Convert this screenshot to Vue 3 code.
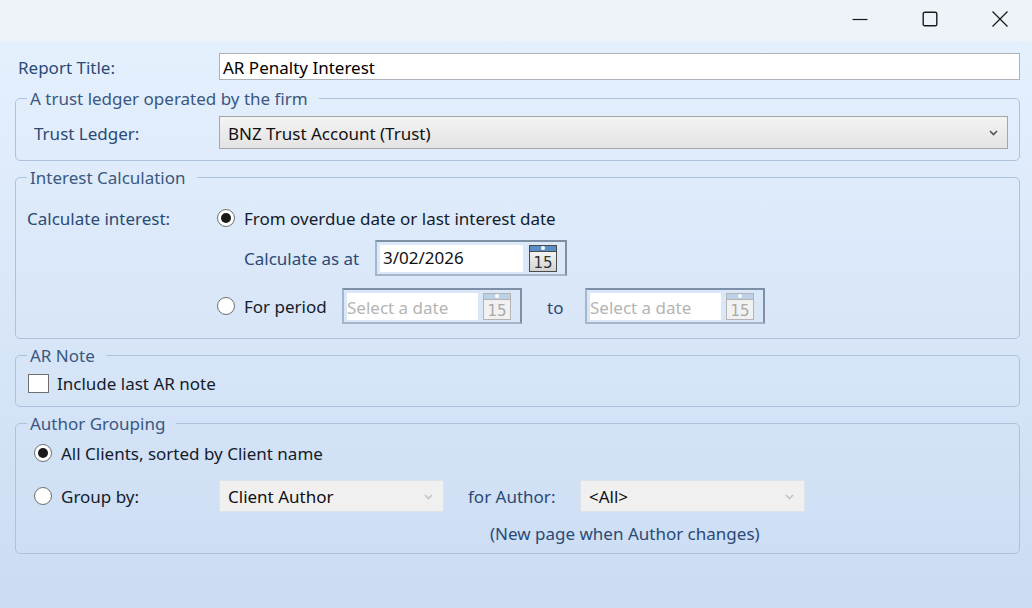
<template>
  <div class="window">
    <div class="titlebar">
      <button class="win_btn">
        <svg width="16" height="16" viewBox="0 0 16 16"><path d="M0.5 8.5H15.5" stroke="#1a1a1a" stroke-width="1.2" fill="none" /></svg>
      </button>
      <button class="win_btn">
        <svg width="16" height="16" viewBox="0 0 16 16"><rect x="1.2" y="1.2" width="13.6" height="13.6" rx="1.6" stroke="#1a1a1a" stroke-width="1.4" fill="none" /></svg>
      </button>
      <button class="win_btn">
        <svg width="16" height="16" viewBox="0 0 16 16"><path d="M0.5 0.5L15.5 15.5M15.5 0.5L0.5 15.5" stroke="#1a1a1a" stroke-width="1.3" fill="none" /></svg>
      </button>
    </div>

    <div class="content">
      <div class="title_row">
        <label class="lbl title_lbl">Report Title:</label>
        <input class="title_input" v-model="report_title" type="text">
      </div>

      <fieldset class="group">
        <legend>A trust ledger operated by the firm</legend>
        <div class="ledger_row">
          <span class="lbl ledger_lbl">Trust Ledger:</span>
          <div class="combo ledger_combo">
            <span>BNZ Trust Account (Trust)</span>
            <svg class="chev" width="9" height="6" viewBox="0 0 9 6"><path d="M1 1L4.5 4.5L8 1" stroke="#555" stroke-width="1.7" fill="none" /></svg>
          </div>
        </div>
      </fieldset>

      <fieldset class="group">
        <legend>Interest Calculation</legend>
        <div class="interest">
          <span class="lbl calc_lbl">Calculate interest:</span>
          <div class="interest_opts">
            <div class="opt_row first_opt">
              <span class="radio checked"></span>
              <span class="opt_text">From overdue date or last interest date</span>
            </div>
            <div class="opt_row asat_row">
              <span class="lbl asat_lbl">Calculate as at</span>
              <div class="date_box asat_box">
                <span class="date_field">{{ as_at }}</span>
                <svg class="cal" width="28" height="27" viewBox="0 0 28 27">
                  <defs>
                    <linearGradient id="cal_face" x1="0" y1="0" x2="0" y2="1">
                      <stop offset="0" stop-color="#fff" />
                      <stop offset="1" stop-color="#d2d2d2" />
                    </linearGradient>
                  </defs>
                  <rect x="0.5" y="0.5" width="27" height="26" fill="url(#cal_face)" stroke="#4a4a4a" />
                  <rect x="1" y="1" width="26" height="5" fill="#5a8fc6" />
                  <path d="M1 6.5H27" stroke="#4a4a4a" />
                  <circle cx="14" cy="3" r="2" fill="#fff" />
                  <text x="14" y="23" text-anchor="middle" class="cal_num" fill="#333">15</text>
                </svg>
              </div>
            </div>
            <div class="opt_row period_row">
              <span class="radio"></span>
              <span class="opt_text period_text">For period</span>
              <div class="date_box period_box" v-for="(d, i) in period_boxes" :key="i" :class="{ second: i == 1 }">
                <span class="date_field placeholder">{{ d }}</span>
                <svg class="cal" width="28" height="27" viewBox="0 0 28 27">
                  <rect x="0.5" y="0.5" width="27" height="26" fill="#f1f1f1" stroke="#b4b4b4" />
                  <rect x="1" y="1" width="26" height="5" fill="#bcd0e6" />
                  <path d="M1 6.5H27" stroke="#b4b4b4" />
                  <circle cx="14" cy="3" r="2" fill="#fff" />
                  <text x="14" y="23" text-anchor="middle" class="cal_num" fill="#aaa">15</text>
                </svg>
                <span v-if="i == 0" class="to_lbl lbl">to</span>
              </div>
            </div>
          </div>
        </div>
      </fieldset>

      <fieldset class="group">
        <legend>AR Note</legend>
        <div class="note_row">
          <span class="check"></span>
          <span class="opt_text">Include last AR note</span>
        </div>
      </fieldset>

      <fieldset class="group">
        <legend>Author Grouping</legend>
        <div class="author">
          <div class="author_row all_row">
            <span class="radio checked"></span>
            <span class="opt_text">All Clients, sorted by Client name</span>
          </div>
          <div class="author_row group_row">
            <span class="radio"></span>
            <span class="opt_text group_text">Group by:</span>
            <div class="combo disabled group_combo">
              <span>Client Author</span>
              <svg class="chev" width="9" height="6" viewBox="0 0 9 6"><path d="M1 1L4.5 4.5L8 1" stroke="#c4c4c4" stroke-width="1.7" fill="none" /></svg>
            </div>
            <span class="lbl for_lbl">for Author:</span>
            <div class="combo disabled group_combo">
              <span>&lt;All&gt;</span>
              <svg class="chev" width="9" height="6" viewBox="0 0 9 6"><path d="M1 1L4.5 4.5L8 1" stroke="#c4c4c4" stroke-width="1.7" fill="none" /></svg>
            </div>
          </div>
          <div class="lbl hint">(New page when Author changes)</div>
        </div>
      </fieldset>
    </div>
  </div>
</template>

<script setup>
import { ref } from 'vue';

const report_title = ref('AR Penalty Interest');
const as_at = '3/02/2026';
const period_boxes = ['Select a date', 'Select a date'];
</script>

<style>
html, body {
  margin: 0;
  padding: 0;
}
</style>

<style scoped>
.window {
  width: 1032px;
  height: 608px;
  overflow: hidden;
  display: flex;
  flex-direction: column;
  font-family: "Noto Sans", "Open Sans", sans-serif;
  font-size: 17px;
  color: #111;
}

.titlebar {
  height: 41px;
  flex: none;
  display: flex;
  justify-content: flex-end;
  background: #eef3f9;
}

.win_btn {
  width: 64px;
  height: 37px;
  margin-left: 6px;
  padding: 0;
  border: 0;
  background: transparent;
  display: flex;
  align-items: center;
  justify-content: center;
}

.content {
  flex: 1;
  padding: 12px 12px 0 15px;
  background: linear-gradient(#e5f0fd, #cbdcf3);
}

.lbl {
  color: #2b4a74;
}

.opt_text {
  color: #141c2a;
}

.title_row {
  display: flex;
  align-items: center;
  height: 27px;
  margin-bottom: 7px;
}

.title_lbl {
  width: 204px;
  padding: 2px 0 0 3px;
  box-sizing: border-box;
}

.title_input {
  flex: 1;
  min-width: 0;
  height: 27px;
  box-sizing: border-box;
  border: 1px solid #aeb2b8;
  padding: 2px 3px 0 3px;
  font: inherit;
  color: #000;
  background: #fff;
  outline: 0;
}

.group {
  margin: 0 0 5px 0;
  padding: 0 11px 0 11px;
  min-width: 0;
  border: 1px solid #aec2dc;
  border-radius: 5px;
}

.group legend {
  padding: 2px 11px 0 3px;
  line-height: 20px;
  color: #3a5880;
}

.ledger_row {
  display: flex;
  align-items: center;
  padding: 7px 0 11px 7px;
}

.ledger_lbl {
  width: 185px;
  padding-top: 2px;
}

.combo {
  display: flex;
  align-items: center;
  justify-content: space-between;
  box-sizing: border-box;
  padding: 1px 9px 0 8px;
  color: #111;
}

.ledger_combo {
  width: 789px;
  height: 33px;
  border: 1px solid #a6a6a6;
  background: linear-gradient(#f3f3f3, #e4e4e4);
}

.combo.disabled {
  width: 225px;
  height: 32px;
  border: 1px solid #dde3ea;
  background: #f0f0f0;
  padding-right: 10px;
}

.interest {
  display: flex;
  height: 150px;
}

.calc_lbl {
  width: 190px;
  padding-top: 19px;
  box-sizing: border-box;
}

.opt_row {
  display: flex;
  align-items: center;
}

.first_opt {
  padding-top: 18px;
  height: 24px;
}

.radio {
  flex: none;
  width: 18px;
  height: 18px;
  box-sizing: border-box;
  border: 1px solid #6f6f6f;
  border-radius: 50%;
  background: #fff;
  margin-right: 9px;
  position: relative;
}

.radio.checked::after {
  content: "";
  position: absolute;
  left: 3px;
  top: 3px;
  width: 10px;
  height: 10px;
  border-radius: 50%;
  background: #1a1a1a;
}

.asat_row {
  padding: 10px 0 0 27px;
}

.asat_lbl {
  width: 131px;
}

.date_box {
  box-sizing: border-box;
  height: 36px;
  display: flex;
  align-items: center;
  justify-content: space-between;
  padding: 0 9px 0 3px;
  border: 2px solid;
  border-color: #7d90a6 #7d90a6 #a3b6cc #a3b6cc;
  position: relative;
}

.asat_box {
  width: 192px;
  padding-right: 8px;
}

.period_box {
  width: 180px;
}

.period_box.second {
  margin-left: 63px;
}

.date_field {
  height: 27px;
  width: 143px;
  box-sizing: border-box;
  background: #fff;
  padding-left: 3px;
  line-height: 25px;
}

.period_box .date_field {
  width: 131px;
  line-height: 29px;
  padding-left: 0;
}

.placeholder {
  color: #b4b4b4;
}

.cal_num {
  font-family: "DejaVu Sans", sans-serif;
  font-size: 15px;
}

.period_row {
  padding-top: 12px;
}

.period_text {
  width: 98px;
}

.to_lbl {
  position: absolute;
  left: 203px;
  top: 6px;
}

.note_row {
  display: flex;
  align-items: center;
  height: 40px;
  box-sizing: border-box;
  padding: 8px 0 13px 1px;
}

.check {
  width: 21px;
  height: 19px;
  box-sizing: border-box;
  border: 1px solid #6f6f6f;
  background: #fff;
  margin-right: 8px;
}

.author {
  height: 119px;
  padding-left: 7px;
}

.author_row {
  display: flex;
  align-items: center;
}

.all_row {
  padding-top: 7px;
  height: 24px;
}

.group_row {
  margin-top: 15px;
}

.group_text {
  width: 158px;
}

.for_lbl {
  width: 112px;
  padding-left: 24px;
  box-sizing: content-box;
}

.hint {
  margin: 10px 0 0 456px;
  line-height: 24px;
}
</style>
